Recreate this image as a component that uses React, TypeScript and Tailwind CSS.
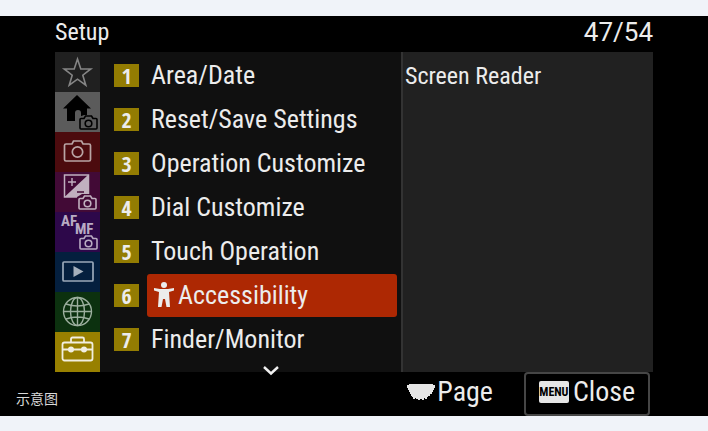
import type { ReactNode } from "react";

const menuItems = [
  "Area/Date",
  "Reset/Save Settings",
  "Operation Customize",
  "Dial Customize",
  "Touch Operation",
  "Accessibility",
  "Finder/Monitor",
];

export default function App() {
  return (
    <div className="min-h-screen bg-[#f0f3f9] py-4">
      <main className="relative bg-black px-[55px] font-['Roboto_Condensed','Liberation_Sans',sans-serif] text-[#ececec]">
        {/* Title bar */}
        <header className="flex h-9 items-start justify-between text-[26px] leading-8">
          <h1 className="text-2xl leading-8">Setup</h1>
          <span className="font-['Roboto',sans-serif]">47/54</span>
        </header>

        <div className="flex">
          {/* Category tabs */}
          <nav className="flex w-[45px] shrink-0 flex-col">
            <Tab label="My Menu" className="bg-[#202020]">
              <path
                d="M22.500 7l3.300 10h10l-8 6.200 3 10-8.300-6-8.300 6 3-10-8-6.200h10z"
                fill="none"
                stroke="#858585"
                strokeWidth="1.600"
              />
            </Tab>
            <Tab label="Main" className="bg-[#5b5b5b]">
              <path d="M22 3L36 16.500h-4V29h-6v-8a3 3 0 0 0-6 0v8h-8V16.500H8z" fill="#000" />
              <path d="M24 25l5-2h8l5 2v13H24z" fill="#5b5b5b" />
              <SmallCamera x={24} y={23} color="#000" />
            </Tab>
            <Tab label="Shooting" className="bg-[#4c0b0e]">
              <g fill="none" stroke="#b9a5a5" strokeWidth="1.700">
                <path d="M11 12h6l1.500-3h8L28 12h6q1.500 0 1.500 1.500v14q0 1.500-1.500 1.500H11q-1.500 0-1.500-1.500v-14Q9.500 12 11 12z" />
                <circle cx="22.500" cy="20" r="5.200" />
              </g>
            </Tab>
            <Tab label="Exposure/Color" className="bg-[#420a36]">
              <path d="M9.500 3h24v22h-24z" fill="none" stroke="#c0b0bf" strokeWidth="1.500" />
              <path d="M33 3v22H9.500z" fill="#c0b0bf" />
              <path d="M13 10h8M17 6v8" stroke="#c0b0bf" strokeWidth="1.400" />
              <path d="M22 20h7" stroke="#420a36" strokeWidth="1.500" />
              <path d="M22 25l5-3h12v3l4 1v13H22z" fill="#420a36" />
              <SmallCamera x={23} y={23} color="#c0b0bf" />
            </Tab>
            <Tab label="Focus" className="bg-[#2d084a]">
              <g fill="#b9abc3" fontFamily="Roboto Condensed, sans-serif" fontWeight="700" fontSize="15">
                <text x="6" y="14">AF</text>
                <text x="20" y="22">MF</text>
              </g>
              <SmallCamera x={24} y={23} color="#b9abc3" />
            </Tab>
            <Tab label="Playback" className="bg-[#041f3e]">
              <rect x="8" y="10" width="30" height="19" rx="1" fill="none" stroke="#9aa9b9" strokeWidth="1.700" />
              <path d="M18.500 14l10 5.500-10 5.500z" fill="#a5b0bc" />
            </Tab>
            <Tab label="Network" className="bg-[#0c310f]">
              <g fill="none" stroke="#9caf9e" strokeWidth="1.400">
                <circle cx="22.500" cy="19.500" r="14" />
                <ellipse cx="22.500" cy="19.500" rx="7" ry="14" />
                <path d="M22.500 5.500v28M8.500 19.500h28M11 12q11.500 4 23 0M11 27q11.500-4 23 0" />
              </g>
            </Tab>
            <Tab label="Setup" className="bg-[#988000]">
              <g fill="none" stroke="#f1eee0" strokeWidth="1.800">
                <rect x="7.500" y="10.500" width="30" height="18" rx="2" />
                <path d="M16 10V7q0-1.500 1.500-1.500h10Q29 5.500 29 7v3M7.500 17.500h30" />
              </g>
              <circle cx="16" cy="17.500" r="3" fill="#f1eee0" />
              <circle cx="29" cy="17.500" r="3" fill="#f1eee0" />
            </Tab>
          </nav>

          {/* Menu groups */}
          <div className="relative min-w-0 flex-1 bg-[#101010] pt-px pr-1 pl-[14px]">
            <ul>
              {menuItems.map((item, i) => (
                <li key={item}>
                  <button
                    type="button"
                    className="flex h-11 w-full items-center gap-2 text-left text-[26px] leading-8"
                  >
                    <span className="flex h-[23px] w-[25px] shrink-0 items-center justify-center bg-[#937c02] font-['Open_Sans_Condensed','Open_Sans',sans-serif] text-[22px] leading-6 font-bold">
                      {i + 1}
                    </span>
                    <span
                      className={`flex h-[43px] flex-1 items-center rounded-[3px] whitespace-nowrap ${
                        item === "Accessibility" ? "bg-[#ad2803] pl-[7px]" : "pl-1"
                      }`}
                    >
                      {item === "Accessibility" && <PersonIcon />}
                      {item}
                    </span>
                  </button>
                </li>
              ))}
            </ul>
            <svg
              viewBox="0 0 16 10"
              className="absolute -bottom-1 left-1/2 ml-3 h-[10px] w-4"
              fill="none"
              stroke="#f0f0f0"
              strokeWidth="2.400"
              aria-hidden="true"
            >
              <path d="M1 1l7 6.500L15 1" />
            </svg>
          </div>

          {/* Group contents */}
          <section className="w-[252px] shrink-0 border-l-2 border-[#333] bg-[#212121] px-[2px] py-2 text-2xl leading-8">
            Screen Reader
          </section>
        </div>

        <footer className="flex h-11 items-start justify-end pr-[3px] text-[28px] leading-8">
          <button type="button" className="mr-[31px] flex h-10 items-center gap-[2px]">
            <svg viewBox="0 0 28 17" className="h-[17px] w-7" fill="#e6e6e6" aria-hidden="true">
              <path d="M0 1h2V0h24v1h2v3h-1v2h-1v2h-1v2h-2v2h-2v1h-1v2h-2v-1h-1v2h-2v-1h-2v1h-2v-1h-2v1H9v-2H8v1H6v-2H5v-1H4v-2H3V8H2V6H1V4H0z" />
            </svg>
            Page
          </button>
          <button
            type="button"
            className="flex h-11 w-[126px] items-center justify-center gap-1 rounded-[4px] border-2 border-[#464646] pb-1"
          >
            <span className="flex h-[22px] w-[30px] items-center justify-center rounded-[2px] bg-[#e6e6e6] text-xs font-bold text-black">
              MENU
            </span>
            Close
          </button>
        </footer>

        <small className="absolute bottom-2 left-4 font-['Noto_Sans_CJK_SC',sans-serif] text-sm leading-5 text-[#d8d8d8]">
          示意图
        </small>
      </main>
    </div>
  );
}

type TabProps = {
  label: string;
  className?: string;
  children: ReactNode;
};

function Tab({ label, className = "", children }: TabProps) {
  return (
    <button type="button" aria-label={label} className={`h-10 w-full ${className}`}>
      <svg viewBox="0 0 45 40" className="h-10 w-full" aria-hidden="true">
        {children}
      </svg>
    </button>
  );
}

function SmallCamera({ x, y, color }: { x: number; y: number; color: string }) {
  return (
    <g transform={`translate(${x} ${y})`} fill="none" stroke={color} strokeWidth="1.600">
      <path d="M2 3.500h3L6.500 1h6L14 3.500h3q1 0 1 1V13q0 1-1 1H2q-1 0-1-1V4.500q0-1 1-1z" />
      <circle cx="9.500" cy="8.500" r="3.300" />
    </g>
  );
}

function PersonIcon() {
  return (
    <svg viewBox="0 0 20 26" className="mr-1 h-[26px] w-5 shrink-0" fill="#ececec" aria-hidden="true">
      <circle cx="10" cy="3" r="3" />
      <path d="M0 6l6 1h8l6-1v2.500l-5 1.500 1 15h-3.500L11 17H9l-1.500 8H4l1-15L0 8.500z" />
    </svg>
  );
}
